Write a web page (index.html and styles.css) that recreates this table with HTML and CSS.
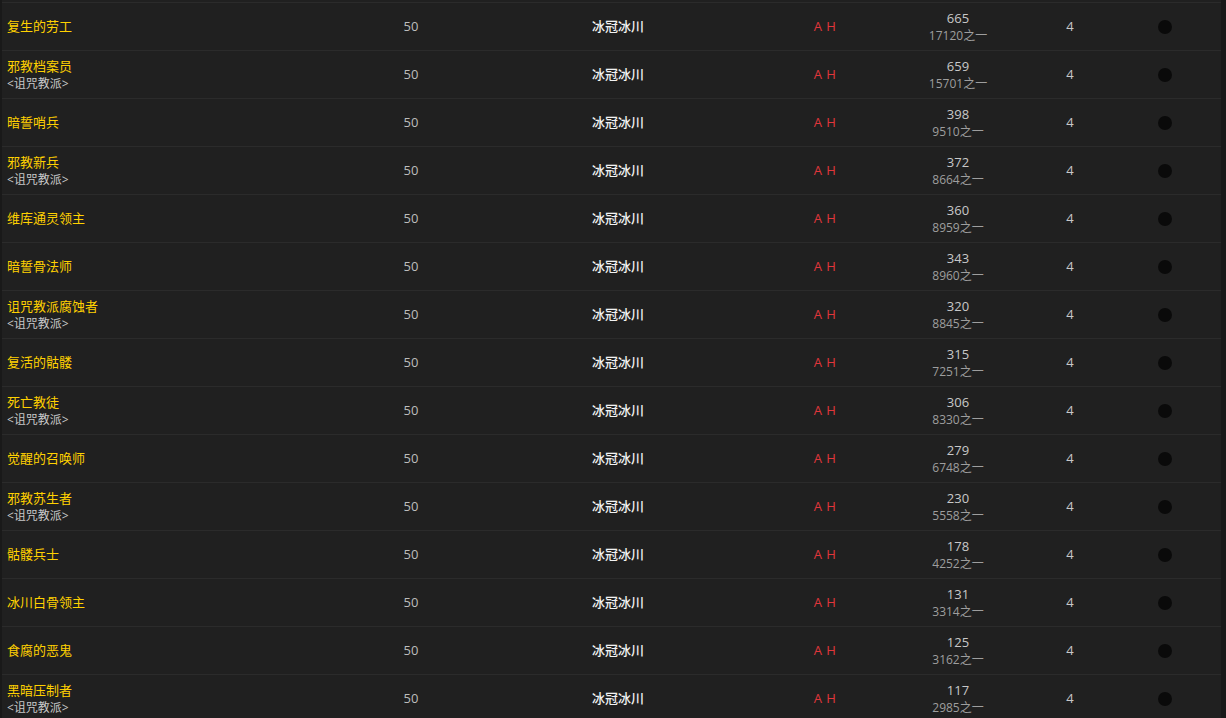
FILE: index.html
```html
<!DOCTYPE html>
<html lang="zh">
<head>
<meta charset="utf-8">
<link rel="stylesheet" href="styles.css">
<title>NPC</title>
</head>
<body>
<div class="table">
  <div class="row"><div class="c name"><a>复生的劳工</a></div><div class="c lvl">50</div><div class="c zone">冰冠冰川</div><div class="c react">A H</div><div class="c count"><span>665</span><small>17120之一</small></div><div class="c type">4</div><div class="c dot"><i></i></div></div>
  <div class="row"><div class="c name"><a>邪教档案员</a><small>&lt;诅咒教派&gt;</small></div><div class="c lvl">50</div><div class="c zone">冰冠冰川</div><div class="c react">A H</div><div class="c count"><span>659</span><small>15701之一</small></div><div class="c type">4</div><div class="c dot"><i></i></div></div>
  <div class="row"><div class="c name"><a>暗誓哨兵</a></div><div class="c lvl">50</div><div class="c zone">冰冠冰川</div><div class="c react">A H</div><div class="c count"><span>398</span><small>9510之一</small></div><div class="c type">4</div><div class="c dot"><i></i></div></div>
  <div class="row"><div class="c name"><a>邪教新兵</a><small>&lt;诅咒教派&gt;</small></div><div class="c lvl">50</div><div class="c zone">冰冠冰川</div><div class="c react">A H</div><div class="c count"><span>372</span><small>8664之一</small></div><div class="c type">4</div><div class="c dot"><i></i></div></div>
  <div class="row"><div class="c name"><a>维库通灵领主</a></div><div class="c lvl">50</div><div class="c zone">冰冠冰川</div><div class="c react">A H</div><div class="c count"><span>360</span><small>8959之一</small></div><div class="c type">4</div><div class="c dot"><i></i></div></div>
  <div class="row"><div class="c name"><a>暗誓骨法师</a></div><div class="c lvl">50</div><div class="c zone">冰冠冰川</div><div class="c react">A H</div><div class="c count"><span>343</span><small>8960之一</small></div><div class="c type">4</div><div class="c dot"><i></i></div></div>
  <div class="row"><div class="c name"><a>诅咒教派腐蚀者</a><small>&lt;诅咒教派&gt;</small></div><div class="c lvl">50</div><div class="c zone">冰冠冰川</div><div class="c react">A H</div><div class="c count"><span>320</span><small>8845之一</small></div><div class="c type">4</div><div class="c dot"><i></i></div></div>
  <div class="row"><div class="c name"><a>复活的骷髅</a></div><div class="c lvl">50</div><div class="c zone">冰冠冰川</div><div class="c react">A H</div><div class="c count"><span>315</span><small>7251之一</small></div><div class="c type">4</div><div class="c dot"><i></i></div></div>
  <div class="row"><div class="c name"><a>死亡教徒</a><small>&lt;诅咒教派&gt;</small></div><div class="c lvl">50</div><div class="c zone">冰冠冰川</div><div class="c react">A H</div><div class="c count"><span>306</span><small>8330之一</small></div><div class="c type">4</div><div class="c dot"><i></i></div></div>
  <div class="row"><div class="c name"><a>觉醒的召唤师</a></div><div class="c lvl">50</div><div class="c zone">冰冠冰川</div><div class="c react">A H</div><div class="c count"><span>279</span><small>6748之一</small></div><div class="c type">4</div><div class="c dot"><i></i></div></div>
  <div class="row"><div class="c name"><a>邪教苏生者</a><small>&lt;诅咒教派&gt;</small></div><div class="c lvl">50</div><div class="c zone">冰冠冰川</div><div class="c react">A H</div><div class="c count"><span>230</span><small>5558之一</small></div><div class="c type">4</div><div class="c dot"><i></i></div></div>
  <div class="row"><div class="c name"><a>骷髅兵士</a></div><div class="c lvl">50</div><div class="c zone">冰冠冰川</div><div class="c react">A H</div><div class="c count"><span>178</span><small>4252之一</small></div><div class="c type">4</div><div class="c dot"><i></i></div></div>
  <div class="row"><div class="c name"><a>冰川白骨领主</a></div><div class="c lvl">50</div><div class="c zone">冰冠冰川</div><div class="c react">A H</div><div class="c count"><span>131</span><small>3314之一</small></div><div class="c type">4</div><div class="c dot"><i></i></div></div>
  <div class="row"><div class="c name"><a>食腐的恶鬼</a></div><div class="c lvl">50</div><div class="c zone">冰冠冰川</div><div class="c react">A H</div><div class="c count"><span>125</span><small>3162之一</small></div><div class="c type">4</div><div class="c dot"><i></i></div></div>
  <div class="row"><div class="c name"><a>黑暗压制者</a><small>&lt;诅咒教派&gt;</small></div><div class="c lvl">50</div><div class="c zone">冰冠冰川</div><div class="c react">A H</div><div class="c count"><span>117</span><small>2985之一</small></div><div class="c type">4</div><div class="c dot"><i></i></div></div>
</div>
</body>
</html>
```

FILE: styles.css
```css
html, body {
  margin: 0;
  padding: 0;
  background: #191919;
  overflow: hidden;
}
body {
  font-family: "Open Sans", "Noto Sans CJK SC", sans-serif;
  font-size: 13px;
  color: #c8c8c8;
}
.table {
  margin-left: 2px;
  width: 1219px;
  padding-top: 2px;
  background: #202020;
}
.row {
  display: grid;
  grid-template-columns: 306px 206px 208px 206px 60px 164px 26px 43px;
  height: 47px;
  border-top: 1px solid #2b2b2b;
}
.c {
  display: flex;
  flex-direction: column;
  justify-content: center;
  align-items: center;
  white-space: nowrap;
  line-height: 17px;
}
.name {
  align-items: flex-start;
  padding-left: 5px;
}
.name a {
  color: #ffd100;
  font-size: 13px;
}
.name small {
  color: #c8c8c8;
  font-size: 12px;
}
.lvl {
  color: #bdbdbd;
}
.zone {
  color: #f2f2f2;
  font-weight: 500;
}
.react {
  color: #e0363b;
  letter-spacing: 0.5px;
}
.count span {
  color: #c8c8c8;
}
.count small {
  color: #9e9e9e;
  font-size: 12px;
}
.type {
  color: #c8c8c8;
}
.dot i {
  display: block;
  width: 14px;
  height: 14px;
  border-radius: 50%;
  background: #0a0a0a;
}
```
